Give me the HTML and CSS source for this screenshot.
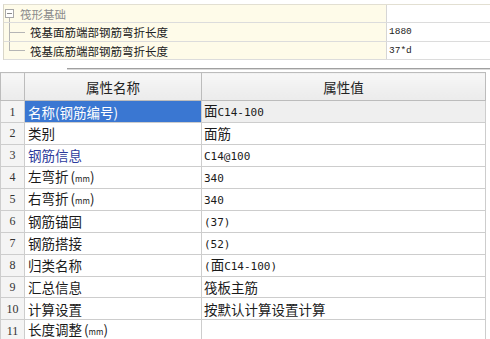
FILE: index.html
```html
<!DOCTYPE html>
<html lang="zh-CN">
<head>
    <meta charset="UTF-8">
    <title>属性编辑</title>
    <link rel="stylesheet" href="styles.css">
</head>
<body>

    <!-- 计算设置树 -->
    <div class="tree">
        <div class="trow r0">
            <div class="tname group"><span class="tog"></span><span>筏形基础</span></div>
            <div class="tval"></div>
        </div>
        <div class="trow r1">
            <div class="tname"><span class="branch"></span><span>筏基面筋端部钢筋弯折长度</span></div>
            <div class="tval">1880</div>
        </div>
        <div class="trow r2">
            <div class="tname"><span class="branch last"></span><span>筏基底筋端部钢筋弯折长度</span></div>
            <div class="tval">37*d</div>
        </div>
    </div>

    <div class="hscroll"></div>

    <!-- 属性表 -->
    <table class="props">
        <colgroup>
            <col class="c-no">
            <col class="c-name">
            <col class="c-val">
        </colgroup>
        <thead>
            <tr>
                <th></th>
                <th>属性名称</th>
                <th>属性值</th>
            </tr>
        </thead>
        <tbody>
            <tr class="sel">
                <td class="no">1</td>
                <td class="name">名称(钢筋编号)</td>
                <td class="val">面<span class="lat">C14-100</span></td>
            </tr>
            <tr>
                <td class="no">2</td>
                <td class="name">类别</td>
                <td class="val">面筋</td>
            </tr>
            <tr>
                <td class="no">3</td>
                <td class="name link">钢筋信息</td>
                <td class="val"><span class="lat">C14@100</span></td>
            </tr>
            <tr>
                <td class="no">4</td>
                <td class="name">左弯折<span class="unit">(<span class="mm">mm</span>)</span></td>
                <td class="val"><span class="lat">340</span></td>
            </tr>
            <tr>
                <td class="no">5</td>
                <td class="name">右弯折<span class="unit">(<span class="mm">mm</span>)</span></td>
                <td class="val"><span class="lat">340</span></td>
            </tr>
            <tr>
                <td class="no">6</td>
                <td class="name">钢筋锚固</td>
                <td class="val"><span class="lat">(37)</span></td>
            </tr>
            <tr>
                <td class="no">7</td>
                <td class="name">钢筋搭接</td>
                <td class="val"><span class="lat">(52)</span></td>
            </tr>
            <tr>
                <td class="no">8</td>
                <td class="name">归类名称</td>
                <td class="val"><span class="lat">(</span>面<span class="lat">C14-100)</span></td>
            </tr>
            <tr>
                <td class="no">9</td>
                <td class="name">汇总信息</td>
                <td class="val">筏板主筋</td>
            </tr>
            <tr>
                <td class="no">10</td>
                <td class="name">计算设置</td>
                <td class="val">按默认计算设置计算</td>
            </tr>
            <tr>
                <td class="no">11</td>
                <td class="name">长度调整<span class="unit">(<span class="mm">mm</span>)</span></td>
                <td class="val"></td>
            </tr>
        </tbody>
    </table>

</body>
</html>
```

FILE: styles.css
```css
body {
    margin: 0;
    background: #fff;
    font-family: "Noto Sans CJK SC", sans-serif;
    color: #1a1a1a;
}

/* tree */
.tree {
    margin: 4px 0 0 3px;
    border-top: 1px solid #e2dfd2;
    border-left: 1px solid #d9d6c8;
}
.trow {
    display: grid;
    grid-template-columns: 382px 1fr;
    height: 17px;
    border-bottom: 1px solid #dcdcdc;
}
.trow.r1 {
    height: 18px;
}
.tname {
    display: flex;
    align-items: center;
    background: #fefbe9;
    font-size: 11.5px;
    color: #222;
}
.tname.group {
    color: #8c8c8c;
    padding-left: 1px;
    background: linear-gradient(#b5b5b5, #b5b5b5) 5px 100% / 1px 50% no-repeat, #fefbe9;
}
.tog {
    width: 7px;
    height: 7px;
    border: 1px solid #a8a8a8;
    background: linear-gradient(#8a8a8a, #8a8a8a) center / 5px 1px no-repeat, #fff;
    margin-right: 6px;
}
.branch {
    align-self: stretch;
    width: 16px;
    margin-left: 5px;
    margin-right: 5px;
    background:
        linear-gradient(#b5b5b5, #b5b5b5) 0 0 / 1px 100% no-repeat,
        linear-gradient(#b5b5b5, #b5b5b5) 0 50% / 100% 1px no-repeat;
}
.branch.last {
    background:
        linear-gradient(#b5b5b5, #b5b5b5) 0 0 / 1px 50% no-repeat,
        linear-gradient(#b5b5b5, #b5b5b5) 0 50% / 100% 1px no-repeat;
}
.tval {
    border-left: 1px solid #d6d6d6;
    padding-left: 2px;
    font-family: "Liberation Mono", monospace;
    font-size: 9.5px;
    line-height: 17px;
    color: #222;
}

.hscroll {
    margin: 8px 0 0 67px;
    height: 0;
    border-top: 1px solid #a0a0a0;
    border-bottom: 1px solid #dadada;
}

/* property grid */
.props {
    margin-top: 2px;
    width: 485px;
    border-collapse: collapse;
    table-layout: fixed;
}
.c-no { width: 24px; }
.c-name { width: 177px; }
.c-val { width: 284px; }

.props th {
    height: 27px;
    padding: 0;
    background: linear-gradient(#f7f7f7, #ebebeb);
    border: 1px solid #bcbcbc;
    font-size: 13.5px;
    font-weight: normal;
    color: #222;
}
.props td {
    height: 20.7px;
    padding: 0 0 0 2px;
    border: 1px solid #cdcdcd;
    font-size: 13.5px;
    line-height: 18px;
    white-space: nowrap;
    overflow: hidden;
}
.props td.no {
    padding: 0;
    text-align: center;
    background: #f4f4f4;
    font-family: "Liberation Serif", serif;
    font-size: 12px;
    color: #333;
}
.props td.name {
    padding-left: 3px;
}
.props .link {
    color: #2d3a9c;
}
.sel .name {
    background: #3a77d2;
    color: #fff;
}
.sel .val {
    background: #efefef;
}
.lat {
    font-family: "DejaVu Sans Mono", monospace;
    font-size: 11px;
}
.unit {
    margin-left: 2px;
}
.mm {
    font-size: 8px;
}
```
